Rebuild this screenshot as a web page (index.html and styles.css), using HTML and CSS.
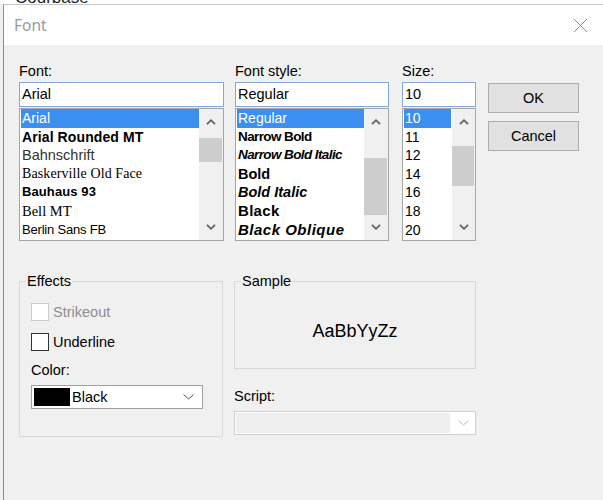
FILE: index.html
```html
<!DOCTYPE html>
<html>
<head>
<meta charset="utf-8">
<title>Font</title>
<link rel="stylesheet" href="styles.css">
</head>
<body>
<div class="topstrip"><span>Courbase</span></div>
<div class="window">
  <div class="titlebar">
    <span class="title">Font</span>
    <svg class="close" width="15" height="15" viewBox="0 0 15 15"><path d="M1 1L14 14M14 1L1 14" stroke="#8a8a8a" stroke-width="1" fill="none"/></svg>
  </div>
  <div class="content">
    <div class="toprow">
      <div class="col col-font">
        <div class="lbl">Font:</div>
        <div class="input">Arial</div>
        <div class="list">
          <ul class="items">
            <li class="sel">Arial</li>
            <li class="f-rounded">Arial Rounded MT</li>
            <li class="f-bahn">Bahnschrift</li>
            <li class="f-bask">Baskerville Old Face</li>
            <li class="f-bauhaus">Bauhaus 93</li>
            <li class="f-bell">Bell MT</li>
            <li class="f-berlin">Berlin Sans FB</li>
          </ul>
          <div class="scrollbar">
            <div class="arrow"><svg width="10" height="6" viewBox="0 0 10 6"><polyline points="1,5.2 5,1.2 9,5.2" fill="none" stroke="#606060" stroke-width="1.7"/></svg></div>
            <div class="track"><div class="thumb thumb-font"></div></div>
            <div class="arrow"><svg width="10" height="6" viewBox="0 0 10 6"><polyline points="1,0.8 5,4.8 9,0.8" fill="none" stroke="#606060" stroke-width="1.7"/></svg></div>
          </div>
        </div>
      </div>
      <div class="col col-style">
        <div class="lbl">Font style:</div>
        <div class="input">Regular</div>
        <div class="list">
          <ul class="items">
            <li class="sel">Regular</li>
            <li class="s-nb">Narrow Bold</li>
            <li class="s-nbi">Narrow Bold Italic</li>
            <li class="s-b">Bold</li>
            <li class="s-bi">Bold Italic</li>
            <li class="s-black">Black</li>
            <li class="s-blacko">Black Oblique</li>
          </ul>
          <div class="scrollbar">
            <div class="arrow"><svg width="10" height="6" viewBox="0 0 10 6"><polyline points="1,5.2 5,1.2 9,5.2" fill="none" stroke="#606060" stroke-width="1.7"/></svg></div>
            <div class="track"><div class="thumb thumb-style"></div></div>
            <div class="arrow"><svg width="10" height="6" viewBox="0 0 10 6"><polyline points="1,0.8 5,4.8 9,0.8" fill="none" stroke="#606060" stroke-width="1.7"/></svg></div>
          </div>
        </div>
      </div>
      <div class="col col-size">
        <div class="lbl">Size:</div>
        <div class="input">10</div>
        <div class="list">
          <ul class="items">
            <li class="sel">10</li>
            <li>11</li>
            <li>12</li>
            <li>14</li>
            <li>16</li>
            <li>18</li>
            <li>20</li>
          </ul>
          <div class="scrollbar scrollbar-size">
            <div class="arrow"><svg width="10" height="6" viewBox="0 0 10 6"><polyline points="1,5.2 5,1.2 9,5.2" fill="none" stroke="#606060" stroke-width="1.7"/></svg></div>
            <div class="track"><div class="thumb thumb-size"></div></div>
            <div class="arrow"><svg width="10" height="6" viewBox="0 0 10 6"><polyline points="1,0.8 5,4.8 9,0.8" fill="none" stroke="#606060" stroke-width="1.7"/></svg></div>
          </div>
        </div>
      </div>
      <div class="buttons">
        <button class="btn">OK</button>
        <button class="btn">Cancel</button>
      </div>
    </div>
    <div class="bottomrow">
      <fieldset class="group effects">
        <legend>Effects</legend>
        <div class="fx">
          <div class="check disabled"><span class="box"></span><span>Strikeout</span></div>
          <div class="check check-2"><span class="box"></span><span>Underline</span></div>
          <div class="lbl color-lbl">Color:</div>
          <div class="combo">
            <span class="swatch"></span><span class="combo-text">Black</span>
            <svg class="chev" width="11" height="6" viewBox="0 0 11 6"><polyline points="0.5,0.5 5.5,5 10.5,0.5" fill="none" stroke="#555" stroke-width="1"/></svg>
          </div>
        </div>
      </fieldset>
      <div class="rightcol">
        <fieldset class="group sample">
          <legend>Sample</legend>
          <div class="sample-area"><span class="sample-text">AaBbYyZz</span></div>
        </fieldset>
        <div class="lbl script-lbl">Script:</div>
        <div class="combo combo-disabled">
          <span class="field"></span>
          <span class="drop"><svg width="11" height="6" viewBox="0 0 11 6"><polyline points="0.5,0.5 5.5,5 10.5,0.5" fill="none" stroke="#bdbdbd" stroke-width="1"/></svg></span>
        </div>
      </div>
    </div>
  </div>
</div>
</body>
</html>
```
FILE: styles.css
```css
html, body {
  margin: 0;
  padding: 0;
  background: #f0f0f0;
  overflow: hidden;
}
body {
  font-family: "Liberation Sans", Arial, sans-serif;
  font-size: 14.5px;
  color: #000;
}
.topstrip {
  height: 4px;
  background: #fff;
  overflow: hidden;
  padding-left: 15px;
}
.topstrip span {
  display: block;
  font-size: 17px;
  line-height: 20px;
  margin-top: -12px;
  color: #222;
}
.window {
  margin-left: 3px;
  border-left: 1px solid #8c8c8c;
  border-top: 1px solid #c8c8c8;
  height: 495px;
  background: #f0f0f0;
}
.titlebar {
  height: 40px;
  background: #fff;
  display: flex;
  align-items: center;
  justify-content: space-between;
  padding: 0 15px 0 10px;
}
.title {
  font-family: "Noto Sans", "Open Sans", sans-serif;
  font-size: 15.5px;
  color: #9a9a9a;
}
.close {
  display: block;
}
.content {
  padding: 18px 0 0 15px;
}
.toprow {
  display: flex;
  align-items: flex-start;
}
.col-font { width: 205px; }
.col-style { width: 154px; margin-left: 11px; }
.col-size { width: 74px; margin-left: 13px; }
.lbl {
  line-height: 17px;
  margin-bottom: 2px;
}
.input {
  height: 25px;
  box-sizing: border-box;
  border: 1px solid #86a8d6;
  background: #fff;
  padding: 0 2px;
  line-height: 23px;
}
.list {
  margin-top: 1px;
  height: 133px;
  box-sizing: border-box;
  border: 1px solid #a5a5a5;
  background: #fff;
  display: flex;
}
.items {
  flex: 1;
  list-style: none;
  margin: 0;
  padding: 0 0 0 1px;
  overflow: hidden;
  min-width: 0;
}
.items li {
  height: 18.6px;
  line-height: 18.6px;
  padding-left: 1px;
  white-space: nowrap;
  font-size: 14px;
}
.items li.sel {
  background: #3a8ff0;
  color: #fff;
}
.f-rounded { font-weight: bold; letter-spacing: 0.1px; }
.f-bahn { color: #333; font-size: 14.5px !important; }
.f-bask { font-family: "Liberation Serif", serif; font-size: 14px !important; letter-spacing: 0.1px; }
.f-bauhaus { font-weight: 900; font-size: 13px !important; letter-spacing: 0.1px; }
.f-bell { font-family: "Liberation Serif", serif; font-size: 14.5px !important; }
.f-berlin { font-size: 13px !important; letter-spacing: -0.2px; }
.s-nb { font-weight: bold; font-size: 13.5px !important; letter-spacing: -0.6px; }
.s-nbi { font-weight: bold; font-style: italic; font-size: 13.5px !important; letter-spacing: -0.6px; }
.s-b { font-weight: bold; font-size: 14.5px !important; }
.s-bi { font-weight: bold; font-style: italic; font-size: 14.5px !important; }
.s-black { font-weight: 900; font-size: 15px !important; letter-spacing: 0.3px; }
.s-blacko { font-weight: 900; font-style: italic; font-size: 15px !important; letter-spacing: 0.5px; }
.scrollbar {
  width: 24px;
  flex: none;
  background: #f0f0f0;
  display: flex;
  flex-direction: column;
}
.scrollbar-size { width: 23px; margin-left: 1px; }
.arrow {
  height: 26px;
  display: flex;
  align-items: center;
  justify-content: center;
}
.arrow svg { display: block; }
.track { flex: 1; }
.thumb {
  background: #cdcdcd;
  margin-right: 1px;
}
.thumb-font { margin-top: 3px; height: 24px; }
.thumb-style { margin-top: 23px; height: 57px; }
.thumb-size { margin-top: 11px; height: 40px; }
.buttons {
  width: 91px;
  margin-left: 12px;
  padding-top: 20px;
}
.btn {
  display: block;
  width: 91px;
  height: 30px;
  box-sizing: border-box;
  background: #e1e1e1;
  border: 1px solid #adadad;
  padding: 0;
  font-family: inherit;
  font-size: 14.5px;
  color: #000;
}
.btn + .btn { margin-top: 8px; }
.bottomrow {
  display: flex;
  align-items: flex-start;
  margin-top: 32px;
}
fieldset.group {
  margin: 0;
  padding: 0;
  border: 1px solid #d9d9d9;
  box-sizing: border-box;
  min-width: 0;
}
legend {
  margin-left: 6px;
  padding: 0 1px;
  line-height: 17px;
  font-size: 14.5px;
}
.effects {
  width: 204px;
  height: 164px;
}
.fx {
  padding: 12px 11px 0 11px;
}
.check {
  display: flex;
  align-items: center;
  height: 20px;
  gap: 4px;
}
.box {
  width: 18px;
  height: 18px;
  box-sizing: border-box;
  border: 1px solid #333;
  background: #fff;
}
.check-2 { margin-top: 10px; }
.disabled { color: #8d8d8d; }
.disabled .box { border-color: #cccccc; }
.color-lbl { margin-top: 10px; margin-bottom: 6px; }
.combo {
  display: flex;
  align-items: center;
  width: 172px;
  height: 24px;
  box-sizing: border-box;
  border: 1px solid #a0a0a0;
  background: #fff;
  padding-left: 2px;
}
.swatch {
  width: 36px;
  height: 18px;
  background: #000;
  margin-right: 2px;
}
.chev { margin-left: auto; margin-right: 8px; }
.rightcol {
  width: 242px;
  margin-left: 11px;
}
.sample {
  width: 242px;
  height: 96px;
}
.sample-area {
  height: 78px;
  box-sizing: border-box;
  padding-top: 4px;
  display: flex;
  align-items: center;
  justify-content: center;
}
.sample-text {
  font-size: 18px;
}
.script-lbl { margin-top: 19px; margin-bottom: 6px; }
.combo-disabled {
  width: 242px;
  border-color: #d0d0d0;
  padding: 0;
  align-items: stretch;
}
.field {
  flex: 1;
  background: #efefef;
  margin: 1px;
}
.drop {
  width: 24px;
  display: flex;
  align-items: center;
  justify-content: center;
}
```
